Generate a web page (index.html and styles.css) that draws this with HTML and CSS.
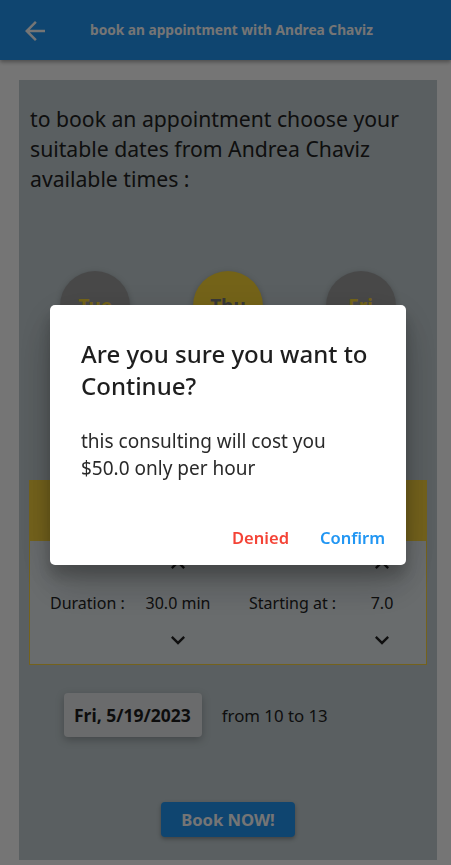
FILE: index.html
```html
<!DOCTYPE html>
<html lang="en">
<head>
<meta charset="utf-8">
<title>Book appointment</title>
<link rel="stylesheet" href="styles.css">
</head>
<body>
<header class="appbar">
  <svg class="back" viewBox="0 0 24 24" width="30" height="30"><path fill="#fff" d="M20 11H7.83l5.59-5.59L12 4l-8 8 8 8 1.41-1.41L7.83 13H20v-2z"/></svg>
  <h1 class="appbar-title">book an appointment with Andrea Chaviz</h1>
</header>

<main class="page">
  <section class="card">
    <p class="intro">to book an appointment choose your suitable dates from Andrea Chaviz available times :</p>

    <div class="days">
      <div class="day">Tue</div>
      <div class="day day-active">Thu</div>
      <div class="day">Fri</div>
    </div>

    <div class="banner"></div>

    <div class="settings">
      <span class="label">Duration :</span>
      <div class="stepper">
        <svg viewBox="0 0 24 24" width="28" height="28"><path d="M7.41 15.41L12 10.83l4.59 4.58L18 14l-6-6-6 6z"/></svg>
        <span class="value">30.0 min</span>
        <svg viewBox="0 0 24 24" width="28" height="28"><path d="M7.41 8.59L12 13.17l4.59-4.58L18 10l-6 6-6-6 1.41-1.41z"/></svg>
      </div>
      <span class="label label-2">Starting at :</span>
      <div class="stepper">
        <svg viewBox="0 0 24 24" width="28" height="28"><path d="M7.41 15.41L12 10.83l4.59 4.58L18 14l-6-6-6 6z"/></svg>
        <span class="value">7.0</span>
        <svg viewBox="0 0 24 24" width="28" height="28"><path d="M7.41 8.59L12 13.17l4.59-4.58L18 10l-6 6-6-6 1.41-1.41z"/></svg>
      </div>
    </div>

    <div class="date-row">
      <div class="chip">Fri, 5/19/2023</div>
      <span class="range">from 10 to 13</span>
    </div>

    <div class="actions">
      <button class="book">Book NOW!</button>
    </div>
  </section>
</main>

<div class="overlay">
  <div class="dialog">
    <h2 class="dialog-title">Are you sure you want to Continue?</h2>
    <p class="dialog-body">this consulting will cost you<br>$50.0 only per hour</p>
    <div class="dialog-actions">
      <button class="btn-text btn-deny">Denied</button>
      <button class="btn-text btn-confirm">Confirm</button>
    </div>
  </div>
</div>
</body>
</html>
```

FILE: styles.css
```css
* { box-sizing: border-box; }

html, body {
  margin: 0;
  padding: 0;
  background: #ffffff;
  font-family: "Noto Sans", "Open Sans", sans-serif;
  color: #1e1e1e;
}

.appbar {
  height: 60px;
  background: #2196f3;
  display: flex;
  align-items: center;
  padding-left: 20px;
  box-shadow: 0 2px 4px rgba(0,0,0,0.35);
  position: relative;
  z-index: 1;
}
.back { display: block; margin-top: 2px; }
.appbar-title {
  margin: 0 0 0 40px;
  font-size: 13.7px;
  font-weight: 700;
  color: #ffffff;
  line-height: 20px;
}

.page {
  padding: 20px 14px 0 19px;
}

.card {
  background: #c4cfd3;
  padding: 24px 10px 23px 10px;
  height: 780px;
}

.intro {
  margin: 0 0 0 1px;
  font-size: 21.2px;
  line-height: 30px;
  color: #222;
}

.days {
  display: flex;
  justify-content: space-around;
  margin-top: 77px;
}
.day {
  width: 70px;
  height: 70px;
  border-radius: 50%;
  background: #9e9e9e;
  color: #fdd835;
  font-weight: 700;
  font-size: 19px;
  display: flex;
  align-items: center;
  justify-content: center;
  box-shadow: 0 2px 6px rgba(0,0,0,0.25);
}
.day-active { background: #fdd835; color: #7a7a7a; }

.banner {
  margin-top: 139px;
  height: 60px;
  background: #fdd63d;
}

.settings {
  border: 1px solid #fdd63d;
  background: #e4ebee;
  display: grid;
  grid-template-columns: 88px 80px 124px 80px;
  align-items: center;
  padding: 10px 0 10px 20px;
  height: 125px;
}
.label { font-size: 16px; color: #222; }
.label-2 { padding-left: 31px; }
.stepper {
  display: flex;
  flex-direction: column;
  align-items: center;
}
.stepper svg { display: block; fill: #222; }
.value {
  font-size: 16px;
  line-height: 24px;
  margin: 12px 0 11px;
  color: #222;
}

.date-row {
  display: flex;
  align-items: center;
  margin-top: 28px;
  padding-left: 35px;
  gap: 20px;
}
.chip {
  height: 44px;
  padding: 0 11px 0 10px;
  background: #e6e9eb;
  border-radius: 4px;
  display: flex;
  align-items: center;
  font-weight: 700;
  font-size: 17.5px;
  color: #1e1e1e;
  box-shadow: 0 3px 8px rgba(0,0,0,0.25);
}
.range { font-size: 16.8px; color: #222; }

.actions {
  display: flex;
  justify-content: center;
  margin-top: 65px;
}
.book {
  width: 134px;
  height: 35px;
  border: 0;
  border-radius: 4px;
  background: #2196f3;
  color: #fff;
  font-family: inherit;
  font-weight: 700;
  font-size: 16.6px;
  box-shadow: 0 2px 4px rgba(0,0,0,0.3);
  padding: 0;
}

.overlay {
  position: fixed;
  inset: 0;
  background: rgba(0,0,0,0.54);
  display: flex;
  align-items: center;
  justify-content: center;
  z-index: 10;
}
.dialog {
  width: 356px;
  height: 260px;
  margin: 5px 0 0 5px;
  background: #ffffff;
  border-radius: 5px;
  padding: 33px 21px 0 31px;
  box-shadow: 0 11px 15px rgba(0,0,0,0.2), 0 24px 38px rgba(0,0,0,0.14), 0 9px 46px rgba(0,0,0,0.12);
}
.dialog-title {
  margin: 0;
  font-size: 24px;
  line-height: 32px;
  font-weight: 500;
  color: #1e1e1e;
}
.dialog-body {
  margin: 26px 0 0;
  font-size: 19px;
  line-height: 27px;
  color: #2a2a2a;
}
.dialog-actions {
  display: flex;
  justify-content: flex-end;
  gap: 31px;
  margin-top: 44px;
}
.btn-text {
  border: 0;
  background: none;
  padding: 0;
  font-family: inherit;
  font-size: 16.5px;
  line-height: 24px;
  font-weight: 600;
}
.btn-deny { color: #f44336; }
.btn-confirm { color: #2196f3; }
```
